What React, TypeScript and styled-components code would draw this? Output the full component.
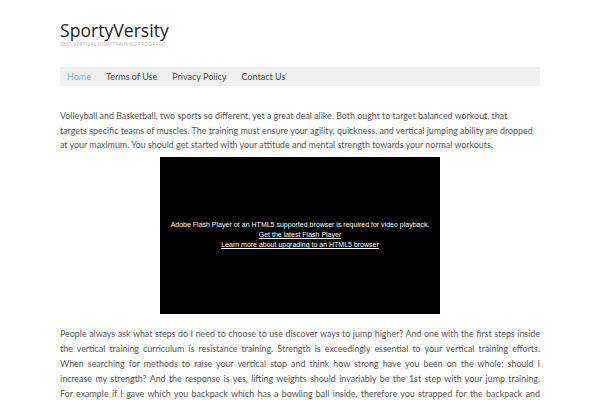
import React from "react";
import styled, { createGlobalStyle } from "styled-components";

const Global = createGlobalStyle`
  html, body { margin: 0; padding: 0; background: #fff; }
  body { font-family: "Lato", "Liberation Sans", sans-serif; }
`;

const Page = styled.div`
  width: 480px;
  margin: 0 auto;
  padding-top: 19px;
`;

const Header = styled.header`
  display: flex;
  flex-direction: column;
  padding-bottom: 20px;
`;

const Title = styled.h1`
  margin: 0;
  font-family: "Open Sans", sans-serif;
  font-weight: 400;
  font-size: 17.6px;
  line-height: 22px;
  color: #222;
`;

const Tagline = styled.div`
  font-family: "Open Sans", sans-serif;
  font-size: 4.9px;
  line-height: 6px;
  letter-spacing: 0.2px;
  text-transform: uppercase;
  color: #bbb;
`;

const Nav = styled.nav`
  display: flex;
  align-items: center;
  height: 19px;
  background: #f0f0f0;
  padding-left: 7px;
  gap: 15px;
`;

const NavItem = styled.a<{ $active?: boolean }>`
  font-size: 9px;
  color: ${(p) => (p.$active ? "#7fb2cf" : "#4a4a4a")};
  text-decoration: none;
`;

const Content = styled.main`
  padding-top: 23px;
`;

const Para = styled.p<{ $justify?: boolean }>`
  margin: 0;
  font-size: 8.9px;
  line-height: ${(p) => (p.$justify ? "15px" : "14.5px")};
  color: #555;
  text-align: ${(p) => (p.$justify ? "justify" : "left")};
  text-align-last: ${(p) => (p.$justify ? "justify" : "auto")};
`;

const VideoWrap = styled.div`
  display: flex;
  justify-content: center;
  padding: 4px 0 12px;
`;

const Video = styled.div`
  width: 280px;
  height: 157px;
  background: #000;
  display: flex;
  flex-direction: column;
  align-items: center;
  justify-content: center;
  font-family: "Liberation Sans", "Arial", sans-serif;
  font-size: 7px;
  line-height: 10px;
  color: #fff;
`;

const VideoLink = styled.a`
  color: #fff;
  text-decoration: underline;
`;

export default function App() {
  return (
    <>
      <Global />
      <Page>
        <Header>
          <Title>SportyVersity</Title>
          <Tagline>Best Vertical Jump Training Programs</Tagline>
        </Header>
        <Nav>
          <NavItem $active>Home</NavItem>
          <NavItem>Terms of Use</NavItem>
          <NavItem>Privacy Policy</NavItem>
          <NavItem>Contact Us</NavItem>
        </Nav>
        <Content>
          <Para>
            Volleyball and Basketball, two sports so different, yet a great deal alike. Both ought to target balanced workout, that
            <br />
            targets specific teams of muscles. The training must ensure your agility, quickness, and vertical jumping ability are dropped
            <br />
            at your maximum. You should get started with your attitude and mental strength towards your normal workouts.
          </Para>
          <VideoWrap>
            <Video>
              <span>Adobe Flash Player or an HTML5 supported browser is required for video playback.</span>
              <VideoLink>Get the latest Flash Player</VideoLink>
              <VideoLink>Learn more about upgrading to an HTML5 browser</VideoLink>
            </Video>
          </VideoWrap>
          <Para $justify>
            People always ask what steps do I need to choose to use discover ways to jump higher? And one with the first steps inside
            <br />
            the vertical training curriculum is resistance training. Strength is exceedingly essential to your vertical training efforts.
            <br />
            When searching for methods to raise your vertical stop and think how strong have you been on the whole; should I
            <br />
            increase my strength? And the response is yes, lifting weights should invariably be the 1st step with your jump training.
            <br />
            For example if I gave which you backpack which has a bowling ball inside, therefore you strapped for the backpack and
            <br />
            after that aimed to jump, you almost certainly wouldn't jump high, even when you seem like you are strong person to
          </Para>
        </Content>
      </Page>
    </>
  );
}
